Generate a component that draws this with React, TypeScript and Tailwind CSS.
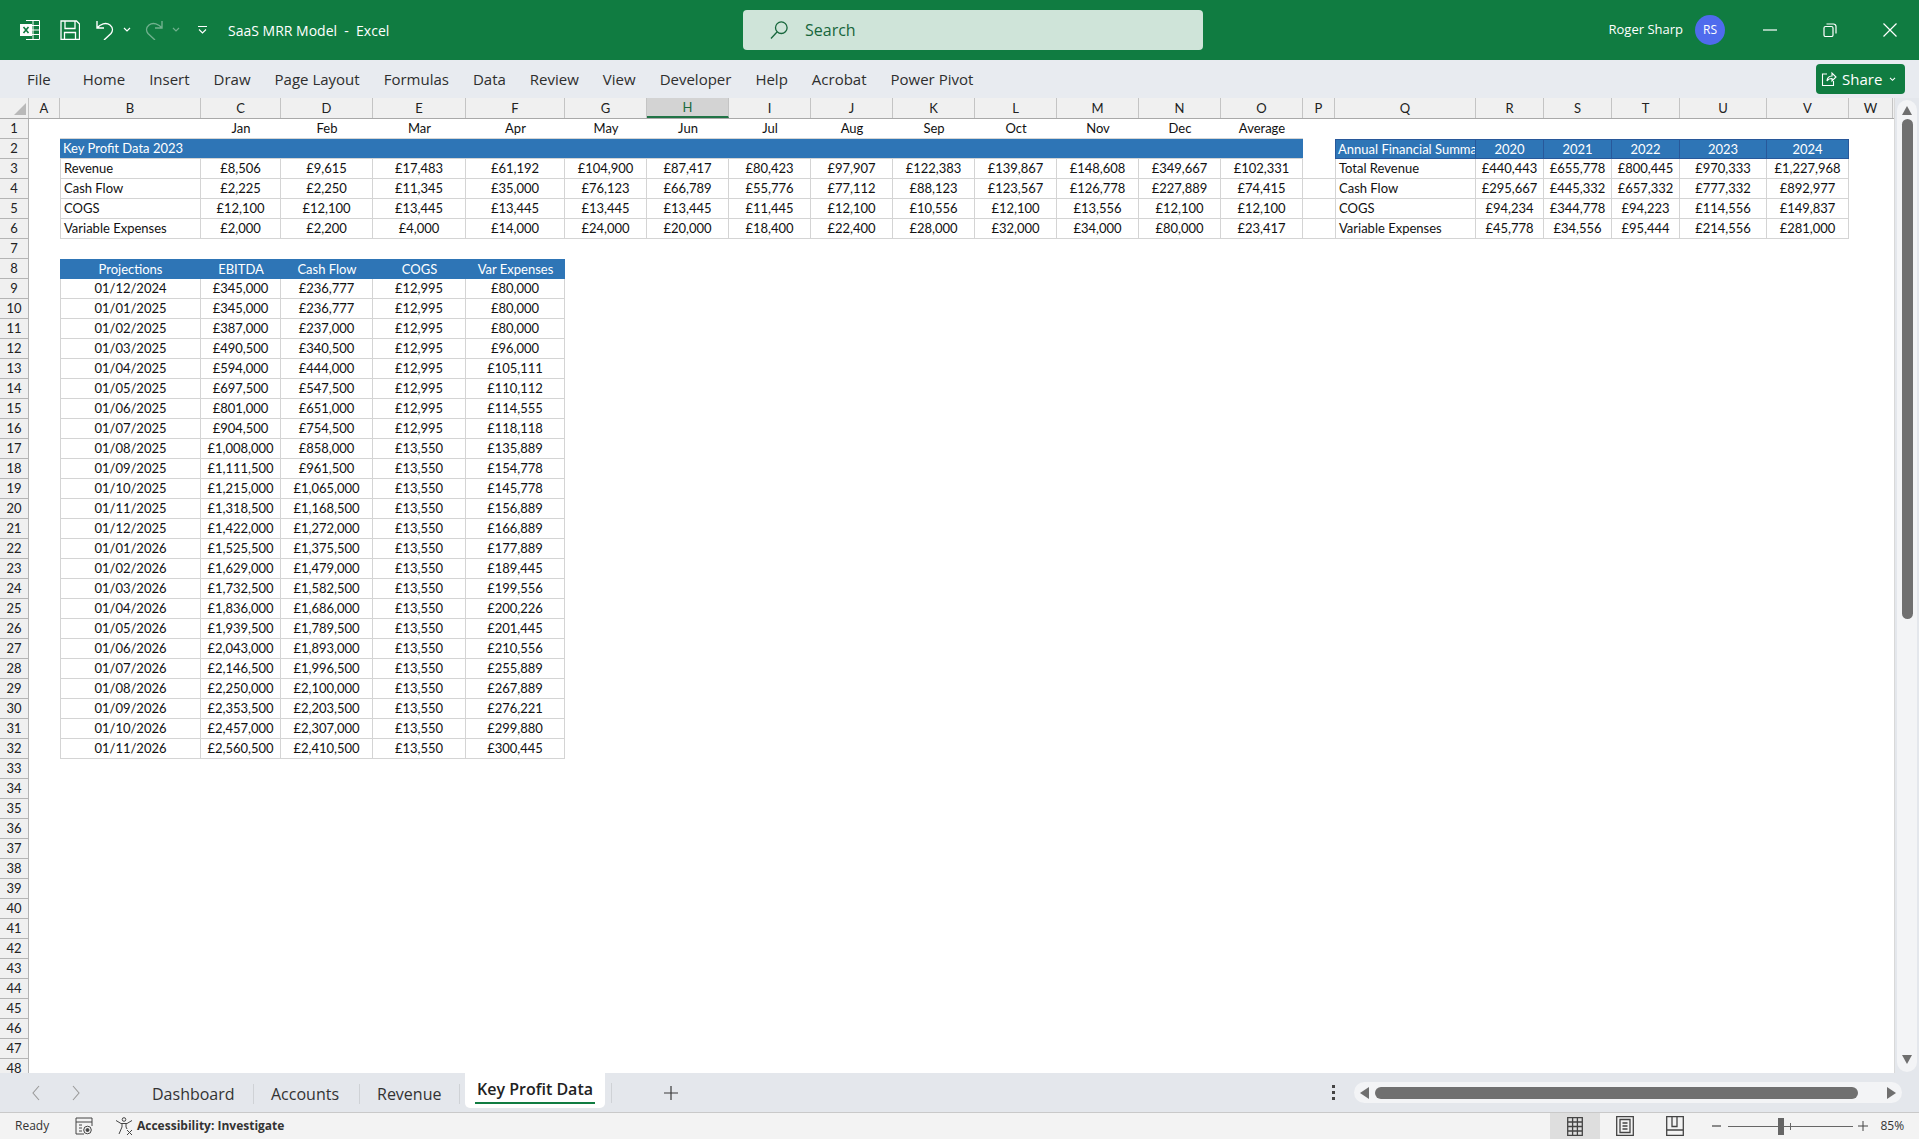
const UI_FONT = "font-['Open_Sans',sans-serif]";

const GRID =
  "grid grid-cols-[29px_31px_141px_80px_92px_93px_99px_82px_82px_82px_82px_82px_82px_82px_82px_82px_32px_141px_68px_68px_68px_87px_82px_44px]";

const COL_LETTERS = "ABCDEFGHIJKLMNOPQRSTUVW".split("");
const MONTHS = ["Jan", "Feb", "Mar", "Apr", "May", "Jun", "Jul", "Aug", "Sep", "Oct", "Nov", "Dec", "Average"];

const KEY_PROFIT: { label: string; values: string[]; annualLabel: string; annual: string[] }[] = [
  {
    label: "Revenue",
    values: ["£8,506", "£9,615", "£17,483", "£61,192", "£104,900", "£87,417", "£80,423", "£97,907", "£122,383", "£139,867", "£148,608", "£349,667", "£102,331"],
    annualLabel: "Total Revenue",
    annual: ["£440,443", "£655,778", "£800,445", "£970,333", "£1,227,968"],
  },
  {
    label: "Cash Flow",
    values: ["£2,225", "£2,250", "£11,345", "£35,000", "£76,123", "£66,789", "£55,776", "£77,112", "£88,123", "£123,567", "£126,778", "£227,889", "£74,415"],
    annualLabel: "Cash Flow",
    annual: ["£295,667", "£445,332", "£657,332", "£777,332", "£892,977"],
  },
  {
    label: "COGS",
    values: ["£12,100", "£12,100", "£13,445", "£13,445", "£13,445", "£13,445", "£11,445", "£12,100", "£10,556", "£12,100", "£13,556", "£12,100", "£12,100"],
    annualLabel: "COGS",
    annual: ["£94,234", "£344,778", "£94,223", "£114,556", "£149,837"],
  },
  {
    label: "Variable Expenses",
    values: ["£2,000", "£2,200", "£4,000", "£14,000", "£24,000", "£20,000", "£18,400", "£22,400", "£28,000", "£32,000", "£34,000", "£80,000", "£23,417"],
    annualLabel: "Variable Expenses",
    annual: ["£45,778", "£34,556", "£95,444", "£214,556", "£281,000"],
  },
];

const PROJECTIONS = [
  ["01/12/2024", "£345,000", "£236,777", "£12,995", "£80,000"],
  ["01/01/2025", "£345,000", "£236,777", "£12,995", "£80,000"],
  ["01/02/2025", "£387,000", "£237,000", "£12,995", "£80,000"],
  ["01/03/2025", "£490,500", "£340,500", "£12,995", "£96,000"],
  ["01/04/2025", "£594,000", "£444,000", "£12,995", "£105,111"],
  ["01/05/2025", "£697,500", "£547,500", "£12,995", "£110,112"],
  ["01/06/2025", "£801,000", "£651,000", "£12,995", "£114,555"],
  ["01/07/2025", "£904,500", "£754,500", "£12,995", "£118,118"],
  ["01/08/2025", "£1,008,000", "£858,000", "£13,550", "£135,889"],
  ["01/09/2025", "£1,111,500", "£961,500", "£13,550", "£154,778"],
  ["01/10/2025", "£1,215,000", "£1,065,000", "£13,550", "£145,778"],
  ["01/11/2025", "£1,318,500", "£1,168,500", "£13,550", "£156,889"],
  ["01/12/2025", "£1,422,000", "£1,272,000", "£13,550", "£166,889"],
  ["01/01/2026", "£1,525,500", "£1,375,500", "£13,550", "£177,889"],
  ["01/02/2026", "£1,629,000", "£1,479,000", "£13,550", "£189,445"],
  ["01/03/2026", "£1,732,500", "£1,582,500", "£13,550", "£199,556"],
  ["01/04/2026", "£1,836,000", "£1,686,000", "£13,550", "£200,226"],
  ["01/05/2026", "£1,939,500", "£1,789,500", "£13,550", "£201,445"],
  ["01/06/2026", "£2,043,000", "£1,893,000", "£13,550", "£210,556"],
  ["01/07/2026", "£2,146,500", "£1,996,500", "£13,550", "£255,889"],
  ["01/08/2026", "£2,250,000", "£2,100,000", "£13,550", "£267,889"],
  ["01/09/2026", "£2,353,500", "£2,203,500", "£13,550", "£276,221"],
  ["01/10/2026", "£2,457,000", "£2,307,000", "£13,550", "£299,880"],
  ["01/11/2026", "£2,560,500", "£2,410,500", "£13,550", "£300,445"],
];

function RowNum({ n }: { n: number }) {
  return (
    <div className="flex items-center justify-center border-r border-b border-[#b4b4b4] bg-[#f0f0f0] text-[#222]">{n}</div>
  );
}

function Data({ children }: { children: React.ReactNode }) {
  return (
    <div className="flex items-center justify-center whitespace-nowrap border-r border-b border-[#d4d4d4] text-[#111]">{children}</div>
  );
}

function Label({ children }: { children: React.ReactNode }) {
  return (
    <div className="flex items-center whitespace-nowrap border-r border-b border-l border-[#d4d4d4] pl-[3px] text-[#111]">{children}</div>
  );
}

function Head({ children }: { children: React.ReactNode }) {
  return (
    <div className="flex items-center justify-center whitespace-nowrap bg-[#2e75b6] text-white">{children}</div>
  );
}

function Sheet() {
  const blankRows: number[] = [];
  for (let i = 33; i <= 48; i++) blankRows.push(i);

  return (
    <div className="flex-1 overflow-hidden bg-white font-['Lato',sans-serif] text-[13px] leading-none">
      {/* column letters */}
      <div className={`${GRID} h-[21px] border-b border-[#a9a9a9] bg-[#f0f0f0] text-[#222]`}>
        <div className="flex items-end justify-end border-r border-[#c4c4c4] pr-[2px] pb-[2px]">
          <div className="size-0 border-t-[14px] border-l-[14px] border-t-transparent border-l-transparent border-b-0 border-r-[0px] [border-bottom-style:none]" />
          <svg width="14" height="14" viewBox="0 0 14 14" className="block">
            <path d="M14 0v14H0z" fill="#b9b9b9" />
          </svg>
        </div>
        {COL_LETTERS.map((c) =>
          c === "H" ? (
            <div key={c} className="flex items-center justify-center border-r border-[#c4c4c4] border-b-2 border-b-[#217346] bg-[#d3d3d3] text-[#1c6b3f]">
              {c}
            </div>
          ) : (
            <div key={c} className="flex items-center justify-center border-r border-[#c4c4c4]">
              {c}
            </div>
          ),
        )}
      </div>

      {/* row 1 */}
      <div className={`${GRID} h-5`}>
        <RowNum n={1} />
        <div />
        <div className="border-b border-[#d4d4d4]" />
        {MONTHS.map((m) => (
          <div key={m} className="flex items-center justify-center border-b border-[#d4d4d4] text-[#111]">
            {m}
          </div>
        ))}
      </div>

      {/* row 2 */}
      <div className={`${GRID} h-5`}>
        <RowNum n={2} />
        <div />
        <div className="col-span-14 flex items-center border-b border-[#d4d4d4] bg-[#2e75b6] pl-[3px] text-white">Key Profit Data 2023</div>
        <div />
        <div className="flex items-center overflow-hidden whitespace-nowrap border border-[#28589a] bg-[#2e75b6] pl-[2px] text-white">Annual Financial Summary</div>
        {["2020", "2021", "2022", "2023", "2024"].map((y) => (
          <div key={y} className="flex items-center justify-center border-y border-r border-[#28589a] bg-[#2e75b6] text-white">
            {y}
          </div>
        ))}
      </div>

      {/* rows 3-6 */}
      {KEY_PROFIT.map((r, i) => (
        <div key={r.label} className={`${GRID} h-5`}>
          <RowNum n={i + 3} />
          <div />
          <Label>{r.label}</Label>
          {r.values.map((v, j) => (
            <Data key={j}>{v}</Data>
          ))}
          <div className="border-b border-[#d4d4d4]" />
          <Label>{r.annualLabel}</Label>
          {r.annual.map((v, j) => (
            <Data key={j}>{v}</Data>
          ))}
        </div>
      ))}

      <div className={`${GRID} h-5`}>
        <RowNum n={7} />
      </div>

      {/* projections */}
      <div className={`${GRID} h-5`}>
        <RowNum n={8} />
        <div />
        {["Projections", "EBITDA", "Cash Flow", "COGS", "Var Expenses"].map((h) => (
          <Head key={h}>{h}</Head>
        ))}
      </div>
      {PROJECTIONS.map((p, i) => (
        <div key={i} className={`${GRID} h-5`}>
          <RowNum n={i + 9} />
          <div />
          <div className="flex items-center justify-center border-r border-b border-l border-[#d4d4d4] text-[#111]">{p[0]}</div>
          {p.slice(1).map((v, j) => (
            <Data key={j}>{v}</Data>
          ))}
        </div>
      ))}
      {blankRows.map((n) => (
        <div key={n} className={`${GRID} h-5`}>
          <RowNum n={n} />
        </div>
      ))}
    </div>
  );
}

function TitleBar() {
  return (
    <div className={`flex h-[60px] items-center bg-[#107c41] text-white ${UI_FONT}`}>
      <svg width="20" height="20" viewBox="0 0 20 20" className="ml-5" fill="none" stroke="white">
        <path d="M6 .5h13.5v19H6M6 5.5h13.5M6 10h13.5M6 14.5h13.5M13 .5v19" />
        <rect x="0.5" y="4.5" width="11" height="11" fill="white" />
        <path d="M3.5 7l5 6M8.5 7l-5 6" stroke="#107c41" strokeWidth="1.6" />
      </svg>
      <svg width="20" height="20" viewBox="0 0 20 20" className="ml-5" fill="none" stroke="white" strokeWidth="1.3">
        <path d="M1 1h15.5L19.5 4v15.5H1zM5 1v7.5h10V1M4.5 19.5V12.5h11v7" />
      </svg>
      <svg width="18" height="20" viewBox="0 0 18 20" className="ml-4" fill="none" stroke="white" strokeWidth="1.4">
        <path d="M1 1v7h7M1 8c3-4 9-6 13-3 3 2.500 3 6 1 8.500L8 20" />
      </svg>
      <svg width="8" height="6" viewBox="0 0 8 6" className="ml-[9px]" fill="none" stroke="white" strokeWidth="1.2">
        <path d="M1 1l3 3 3-3" />
      </svg>
      <svg width="18" height="20" viewBox="0 0 18 20" className="ml-[14px] opacity-40" fill="none" stroke="white" strokeWidth="1.4">
        <path d="M17 1v7h-7M17 8c-3-4-9-6-13-3-3 2.500-3 6-1 8.500L10 20" />
      </svg>
      <svg width="8" height="6" viewBox="0 0 8 6" className="ml-[9px] opacity-40" fill="none" stroke="white" strokeWidth="1.2">
        <path d="M1 1l3 3 3-3" />
      </svg>
      <svg width="9" height="8" viewBox="0 0 9 8" className="ml-[18px]" fill="none" stroke="white" strokeWidth="1.1">
        <path d="M0 .5h9M1 3.500l3.500 3.500L8 3.500" />
      </svg>
      <div className="ml-[21px] w-[515px] whitespace-pre text-[14px]">SaaS MRR Model  -  Excel</div>

      <div className="flex h-10 w-[460px] items-center rounded-[4px] bg-[#cfe4d9] pl-[27px] text-[16px] text-[#17663c]">
        <svg width="18" height="18" viewBox="0 0 18 18" fill="none" stroke="#17663c" strokeWidth="1.3">
          <circle cx="11.300" cy="6.700" r="5.800" />
          <path d="M7 11L1 17.500" />
        </svg>
        <span className="ml-[17px]">Search</span>
      </div>

      <div className="ml-auto text-[13px]">Roger Sharp</div>
      <div className="ml-[12px] flex size-[30px] items-center justify-center rounded-full bg-[#4f6bed] text-[12px]">RS</div>
      <svg width="14" height="2" viewBox="0 0 14 2" className="ml-[38px]" stroke="white" strokeWidth="1.2">
        <path d="M0 1h14" />
      </svg>
      <svg width="14" height="14" viewBox="0 0 14 14" className="ml-[46px]" fill="none" stroke="white" strokeWidth="1.2">
        <rect x="1" y="3.500" width="9" height="10" rx="1.500" />
        <path d="M3.500 1h7a2.500 2.500 0 012.500 2.500v7" />
      </svg>
      <svg width="14" height="14" viewBox="0 0 14 14" className="mr-[22px] ml-[46px]" fill="none" stroke="white" strokeWidth="1.2">
        <path d="M.5.5l13 13M13.500.5l-13 13" />
      </svg>
    </div>
  );
}

function RibbonTabs() {
  const tabs = ["Home", "Insert", "Draw", "Page Layout", "Formulas", "Data", "Review", "View", "Developer", "Help", "Acrobat", "Power Pivot"];
  return (
    <div className={`flex h-[38px] items-center bg-[#e8ebf0] pl-[27px] text-[15px] text-[#2e2e2e] ${UI_FONT}`}>
      <span className="mr-[32px]">File</span>
      <div className="flex gap-6">
        {tabs.map((t) => (
          <span key={t}>{t}</span>
        ))}
      </div>
      <div className="mr-[14px] ml-auto flex h-[30px] w-[89px] items-center rounded-[4px] bg-[#107c41] pl-[5px] text-white">
        <svg width="16" height="16" viewBox="0 0 16 16" fill="none" stroke="white" strokeWidth="1.1">
          <path d="M6 3H1.500v11.500h11V10M6 10c0-3 2-5 5-5V2l4 4-4 4V7.500c-2 0-4 .5-5 2.500z" />
        </svg>
        <span className="ml-[5px] text-[15px]">Share</span>
        <svg width="7" height="5" viewBox="0 0 8 6" className="ml-[7px]" fill="none" stroke="white" strokeWidth="1.3">
          <path d="M1 1l3 3 3-3" />
        </svg>
      </div>
    </div>
  );
}

function VScroll() {
  return (
    <div className="flex w-[25px] flex-col border-l border-[#d9d9d9] bg-[#e4e7ec] pt-[2px] pb-[1px] pl-[2px] pr-[2px]">
      <div className="flex flex-1 flex-col items-center rounded-full bg-[#f3f4f6] pt-[6px] pb-[8px]">
        <svg width="10" height="9" viewBox="0 0 10 9">
          <path d="M5 0l5 9H0z" fill="#6f6f6f" />
        </svg>
        <div className="mt-[4px] h-[500px] w-[11px] rounded-full bg-[#707070]" />
        <svg width="10" height="9" viewBox="0 0 10 9" className="mt-auto">
          <path d="M5 9L0 0h10z" fill="#6f6f6f" />
        </svg>
      </div>
    </div>
  );
}

function SheetTabs() {
  return (
    <div className={`flex h-10 items-center border-b border-[#c9c9c9] bg-[#e4e7ec] pl-[31px] text-[#333] ${UI_FONT}`}>
      <svg width="10" height="16" viewBox="0 0 10 16" fill="none" stroke="#9a9a9a" strokeWidth="1.1">
        <path d="M8 1L2 8l6 7" />
      </svg>
      <svg width="10" height="16" viewBox="0 0 10 16" className="ml-[30px]" fill="none" stroke="#9a9a9a" strokeWidth="1.1">
        <path d="M2 1l6 7-6 7" />
      </svg>
      <div className="ml-[71px] flex items-center pt-[2px] text-[16px]">
        <span className="w-[84px]">Dashboard</span>
        <div className="mx-[17px] h-[20px] w-px bg-[#cfd2d6]" />
        <span className="w-[71px]">Accounts</span>
        <div className="mx-[17px] h-[20px] w-px bg-[#cfd2d6]" />
        <span className="w-[66px]">Revenue</span>
        <div className="ml-[16px] h-[20px] w-px bg-[#cfd2d6]" />
      </div>
      <div className="ml-[5px] flex h-[35px] w-[140px] flex-col items-center self-start rounded-b-[5px] bg-white pt-[5px] text-[16px] font-semibold text-[#222]">
        <span className="leading-[22px]">Key Profit Data</span>
        <div className="mt-[2px] h-[2px] w-[120px] bg-[#107c41]" />
      </div>
      <div className="ml-[6px] h-[20px] w-px bg-[#cfd2d6]" />
      <svg width="16" height="16" viewBox="0 0 16 16" className="ml-[51px]" stroke="#3a3a3a" strokeWidth="1.2">
        <path d="M8 1v14M1 8h14" />
      </svg>
      <div className="ml-[653px] flex flex-col gap-[3px]">
        <div className="size-[3px] bg-[#444]" />
        <div className="size-[3px] bg-[#444]" />
        <div className="size-[3px] bg-[#444]" />
      </div>
      <div className="ml-[19px] flex h-[21px] w-[548px] items-center rounded-full bg-[#f3f4f6] pr-[6px] pl-[6px]">
        <svg width="9" height="12" viewBox="0 0 9 12">
          <path d="M0 6l9-6v12z" fill="#6f6f6f" />
        </svg>
        <div className="ml-[6px] h-[12px] w-[483px] rounded-full bg-[#707070]" />
        <svg width="9" height="12" viewBox="0 0 9 12" className="ml-auto">
          <path d="M9 6L0 0v12z" fill="#6f6f6f" />
        </svg>
      </div>
    </div>
  );
}

function StatusBar() {
  return (
    <div className={`flex h-[26px] items-center bg-[#f3f3f3] pl-[15px] text-[12px] text-[#333] ${UI_FONT}`}>
      <span className="w-[60px]">Ready</span>
      <svg width="18" height="18" viewBox="0 0 18 18" fill="none" stroke="#444" strokeWidth="1">
        <path d="M1 1h16v4H1zM1 5v12h8M17 5v4M4 8h3M4 11h3M4 14h3" />
        <circle cx="12.500" cy="13" r="3.800" />
        <circle cx="12.500" cy="13" r="1.500" fill="#444" />
      </svg>
      <svg width="19" height="19" viewBox="0 0 19 19" className="ml-[22px]" fill="none" stroke="#444" strokeWidth="1">
        <circle cx="9" cy="2.500" r="1.800" />
        <path d="M1 3.500l5 3h6l5-3M7 7v3l-3 7M11 7v3l1 2M12 13l5 5M17 13l-5 5" />
      </svg>
      <span className="ml-[3px] font-bold text-[12px]">Accessibility: Investigate</span>

      <div className="ml-[1266px] flex h-full w-[50px] items-center justify-center bg-[#dedede]">
        <svg width="16" height="19" viewBox="0 0 16 19" fill="none" stroke="#444" strokeWidth="1.3">
          <path d="M.7.7h14.600v17.600H.7zM5.600.7v17.600M10.400.7v17.600M.7 5h14.600M.7 9.500h14.600M.7 14h14.600" />
        </svg>
      </div>
      <svg width="18" height="20" viewBox="0 0 18 20" className="ml-[16px]" fill="none" stroke="#444" strokeWidth="1.3">
        <path d="M.7.7h16.600v18.600H.7zM4 3.500h10v13H4z" />
        <path d="M6.500 7h5M6.500 10h5M6.500 13h5" />
      </svg>
      <svg width="18" height="20" viewBox="0 0 18 20" className="ml-[32px]" fill="none" stroke="#444" strokeWidth="1.3">
        <path d="M.7.7h16.600v18.600H.7zM.7 14h16.600M6 .7v9.800h5V.7" />
      </svg>
      <svg width="9" height="2" viewBox="0 0 9 2" className="ml-[28px]" stroke="#444" strokeWidth="1.2">
        <path d="M0 1h9" />
      </svg>
      <div className="relative ml-[7px] h-px w-[125px] bg-[#666]">
        <div className="absolute top-[-8px] left-[50px] h-[17px] w-[6px] bg-[#666]" />
        <div className="absolute top-[-3px] left-[62px] h-[7px] w-px bg-[#666]" />
      </div>
      <svg width="10" height="10" viewBox="0 0 10 10" className="ml-[5px]" stroke="#444" strokeWidth="1">
        <path d="M5 0v10M0 5h10" />
      </svg>
      <span className="ml-[12px] text-[12px]">85%</span>
    </div>
  );
}

export default function App() {
  return (
    <div className="flex h-[1139px] w-[1919px] flex-col overflow-hidden">
      <TitleBar />
      <RibbonTabs />
      <div className="flex min-h-0 flex-1 shadow-[inset_0_2px_3px_rgba(0,0,0,0.1)]">
        <Sheet />
        <VScroll />
      </div>
      <SheetTabs />
      <StatusBar />
    </div>
  );
}
